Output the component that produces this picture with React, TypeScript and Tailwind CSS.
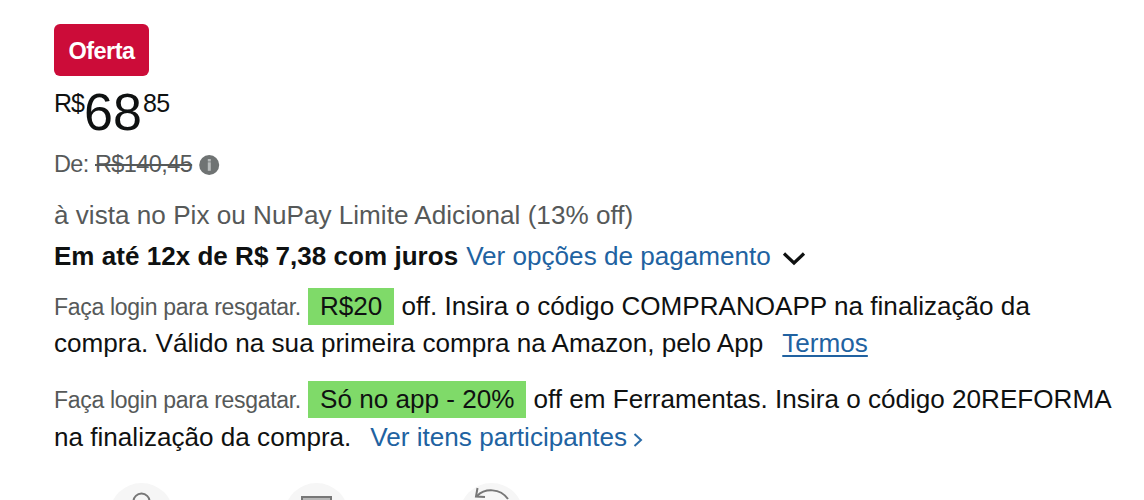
const ChevronDown = () => (
  <svg className="ml-[11px] h-[15px] w-[24px] self-center translate-y-[2px]" viewBox="0 0 24 15" fill="none">
    <path d="M2 2.5 L12 12 L22 2.5" stroke="#0f1111" strokeWidth="3.2" />
  </svg>
);

const ChevronRight = () => (
  <svg className="ml-[6px] h-[14px] w-[10px] self-center translate-y-[2px]" viewBox="0 0 10 14" fill="none">
    <path d="M1.5 1 L8 7 L1.5 13" stroke="#2b6ca8" strokeWidth="2" />
  </svg>
);

const InfoIcon = () => (
  <svg className="ml-[7px] h-[21px] w-[21px] translate-y-[0.5px]" viewBox="0 0 21 21">
    <circle cx="10.2" cy="10.5" r="10" fill="#6f7373" />
    <rect x="8.8" y="4.5" width="3" height="2.5" fill="#b8bcbc" />
    <rect x="8.8" y="7.8" width="3" height="8.5" fill="#b8bcbc" />
  </svg>
);

const services = [
  {
    name: 'secure',
    icon: <circle cx="32.5" cy="19.5" r="8" />,
  },
  {
    name: 'delivery',
    icon: <path d="M18 15 H47 V40 H18 Z" fill="#b8b8b8" />,
  },
  {
    name: 'returns',
    icon: (
      <>
        <path d="M18 14 C26 6 41 6 49 17" />
        <path d="M18.5 6 L17 14.5 L26 15" />
      </>
    ),
  },
];

const App = () => {
  return (
    <main className="flex h-[500px] w-[1144px] flex-col overflow-hidden bg-white pl-[54px] pt-6 font-['Liberation_Sans',Arial,sans-serif] text-[26.1px] leading-[37px] whitespace-nowrap text-[#0f1111]">
      <div className="flex h-[52px] w-[95px] shrink-0 items-center justify-center rounded-[6px] bg-[#cc0c39] text-[23.5px] tracking-[-0.55px] font-bold text-white">
        <span className="translate-y-[1px]">Oferta</span>
      </div>

      {/* Price */}
      <div className="mt-[10px] flex h-[52px] shrink-0 items-start">
        <span className="w-[30px] text-[25px] leading-[35px] tracking-[-1px]">R$</span>
        <span className="w-[58px] text-[52px] leading-[52px]">68</span>
        <span className="ml-px text-[25px] leading-[35px] tracking-[-0.6px]">85</span>
      </div>

      <div className="mt-[6px] flex h-[40px] shrink-0 items-center text-[23.5px] tracking-[-0.6px] text-[#565959]">
        <span className="w-[34px]">De:</span>
        <span className="ml-[7px] line-through">R$140,45</span>
        <InfoIcon />
      </div>

      {/* Payment */}
      <div className="mt-[13px] flex h-[41px] shrink-0 text-[#565959]">
        <span className="tracking-[0.02px]">à vista no Pix ou NuPay Limite Adicional (13% off)</span>
      </div>
      <div className="flex h-[37px] shrink-0">
        <span className="text-[26px] font-bold tracking-[0.03px]">Em até 12x de R$ 7,38 com juros</span>
        <span className="ml-[8px] text-[#2162a1]">Ver opções de pagamento</span>
        <ChevronDown />
      </div>

      {/* Coupons */}
      <div className="mt-[13px] flex shrink-0 flex-col">
        <div className="flex h-[37px] items-baseline">
          <span className="w-[247px] text-[23px] tracking-[-0.3px] text-[#565959]">Faça login para resgatar.</span>
          <span className="ml-[7px] bg-[#7fda69] px-[12px]">R$20</span>
          <span className="ml-[7px]">off. Insira o código COMPRANOAPP na finalização da</span>
        </div>
        <div className="flex h-[37px] items-baseline">
          <span>compra. Válido na sua primeira compra na Amazon, pelo App</span>
          <span className="ml-[19px] text-[#2162a1] underline decoration-[1.5px] underline-offset-[3px]">Termos</span>
        </div>
      </div>
      <div className="mt-[19px] flex shrink-0 flex-col">
        <div className="flex h-[37px] items-baseline">
          <span className="w-[247px] text-[23px] tracking-[-0.3px] text-[#565959]">Faça login para resgatar.</span>
          <span className="ml-[7px] bg-[#7fda69] px-[12px]">Só no app - 20%</span>
          <span className="ml-[7px]">off em Ferramentas. Insira o código 20REFORMA</span>
        </div>
        <div className="mt-px flex h-[37px] items-baseline">
          <span>na finalização da compra.</span>
          <span className="ml-[19px] text-[#2162a1]">Ver itens participantes</span>
          <ChevronRight />
        </div>
      </div>

      <div className="mt-[26px] ml-[55px] flex shrink-0 gap-[110px]">
        {services.map((service) => (
          <svg key={service.name} className="h-[65px] w-[65px]" viewBox="0 0 65 65" fill="none" stroke="#777777" strokeWidth="2">
            <circle cx="32.5" cy="33" r="32" fill="#f6f6f6" stroke="none" />
            {service.icon}
          </svg>
        ))}
      </div>
    </main>
  );
};

export default App;
